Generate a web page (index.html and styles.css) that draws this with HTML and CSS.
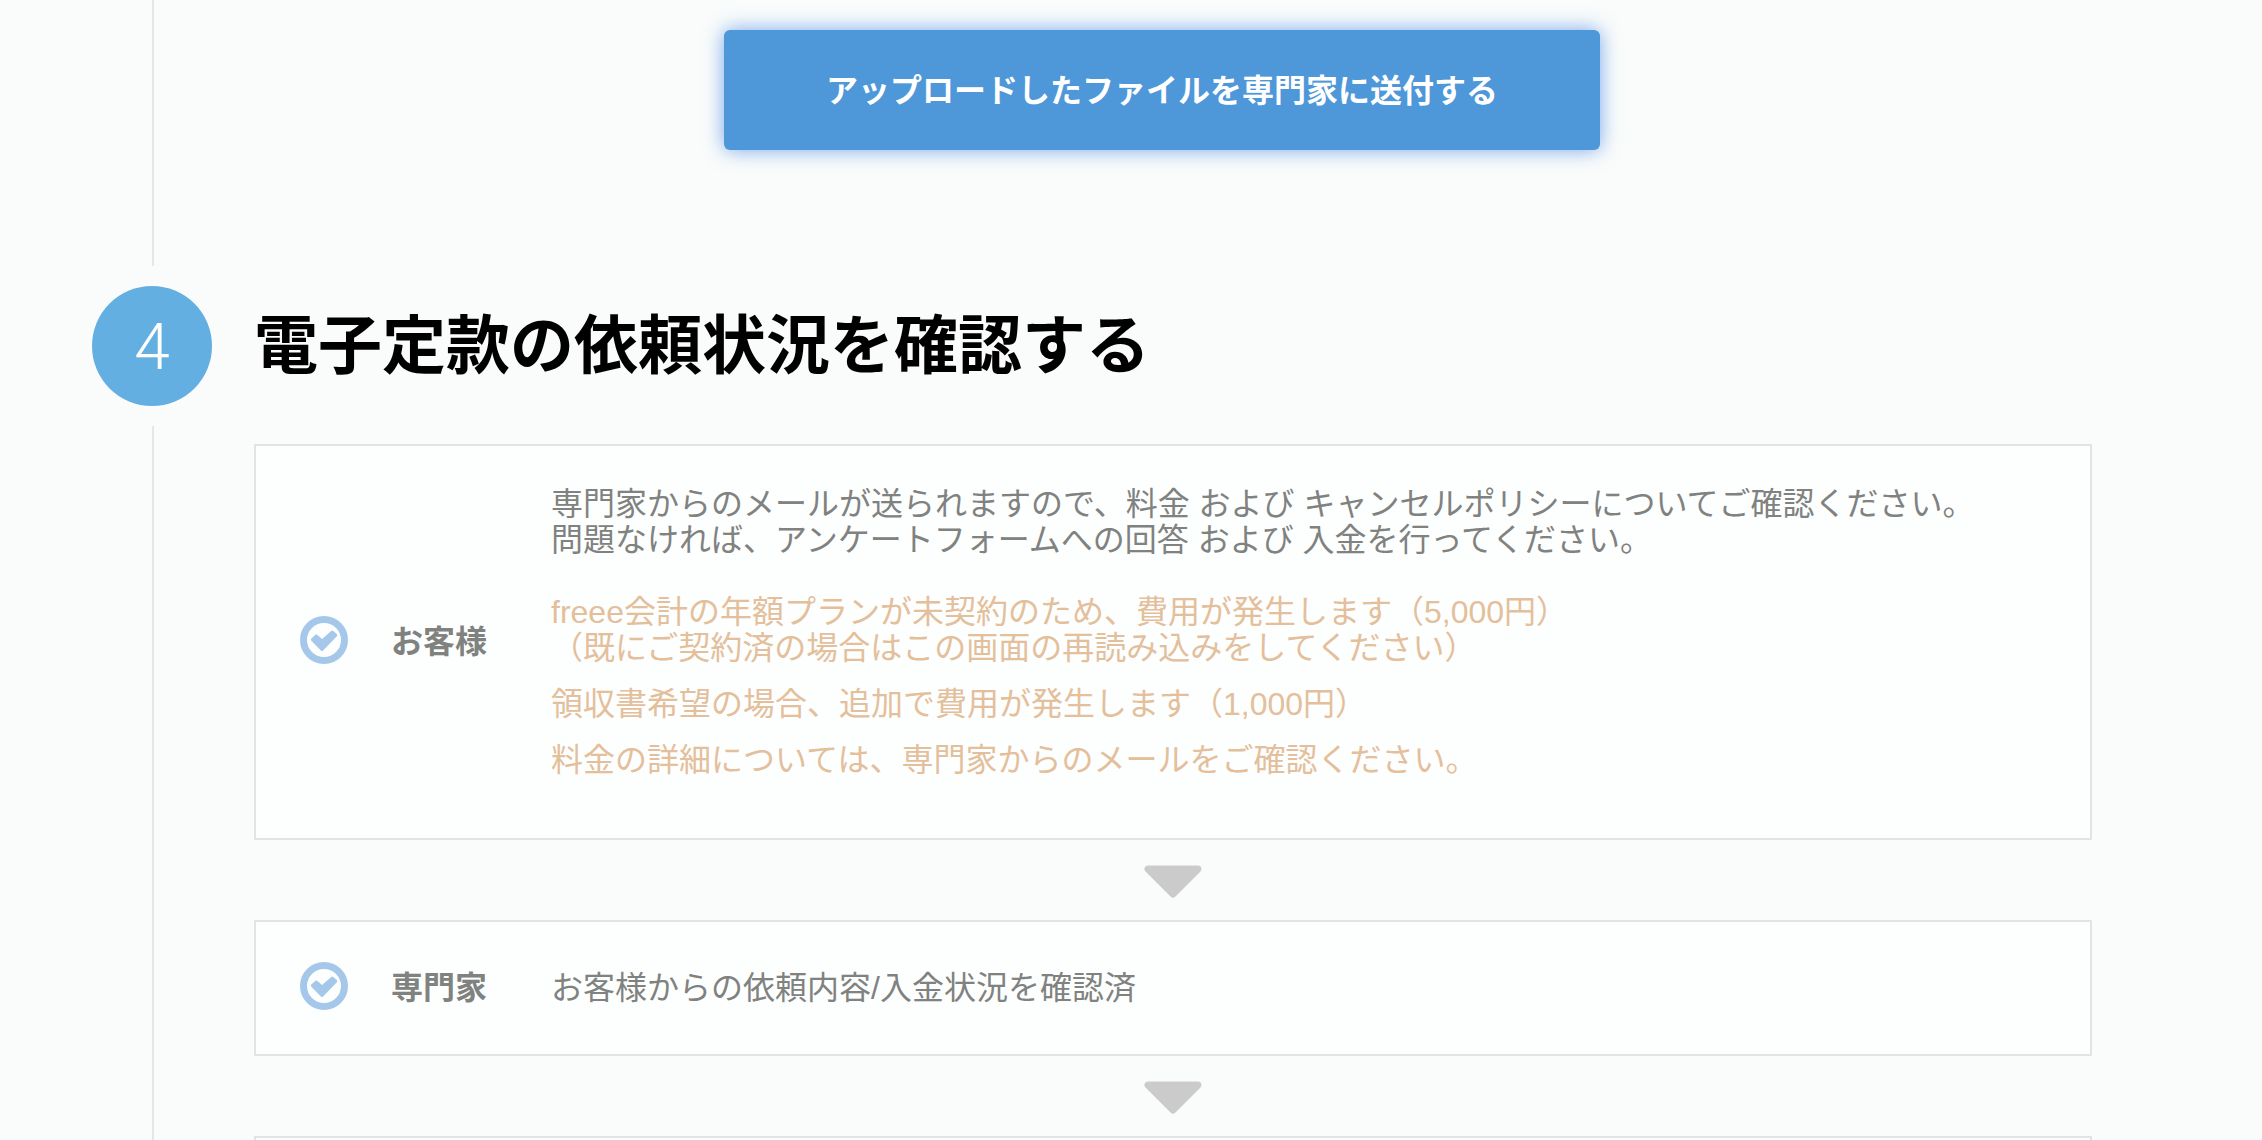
FILE: index.html
```html
<!DOCTYPE html>
<html lang="ja">
<head>
    <meta charset="UTF-8">
    <meta name="viewport" content="width=device-width, initial-scale=1.0">
    <title>電子定款の依頼</title>
    <link rel="stylesheet" href="styles.css">
</head>
<body>
    <svg class="symbols" aria-hidden="true">
        <symbol id="icon-check" viewBox="0 0 48 48">
            <circle cx="24" cy="24" r="20.5" fill="none" stroke="currentColor" stroke-width="7"/>
            <path d="M12.4 23.6 L16.2 20 L22 25 L32.2 16 L35.8 19.2 L22 33.4 Z" fill="currentColor" stroke="currentColor" stroke-width="3" stroke-linejoin="round"/>
        </symbol>
        <symbol id="icon-arrow" viewBox="0 0 58 33">
            <path d="M4 4 H54 L29 29 Z" fill="currentColor" stroke="currentColor" stroke-width="7" stroke-linejoin="round"/>
        </symbol>
    </svg>

    <main class="steps">
        <section class="step">
            <div class="step-marker">
                <span class="step-line"></span>
            </div>
            <div class="step-action">
                <button type="button" class="send-button">アップロードしたファイルを専門家に送付する</button>
            </div>
        </section>

        <section class="step">
            <div class="step-marker">
                <span class="step-number">4</span>
                <span class="step-line"></span>
            </div>
            <div class="step-body">
                <h2 class="step-title">電子定款の依頼状況を確認する</h2>

                <div class="status-card">
                    <svg class="status-icon"><use href="#icon-check"/></svg>
                    <strong class="status-name">お客様</strong>
                    <div class="status-text">
                        <p class="lead">専門家からのメールが送られますので、料金 および キャンセルポリシーについてご確認ください。<br>問題なければ、アンケートフォームへの回答 および 入金を行ってください。</p>
                        <p class="notice">freee会計の年額プランが未契約のため、費用が発生します（5,000円）<br>（既にご契約済の場合はこの画面の再読み込みをしてください）</p>
                        <p class="notice">領収書希望の場合、追加で費用が発生します（1,000円）</p>
                        <p class="notice">料金の詳細については、専門家からのメールをご確認ください。</p>
                    </div>
                </div>

                <svg class="arrow"><use href="#icon-arrow"/></svg>

                <div class="status-card">
                    <svg class="status-icon"><use href="#icon-check"/></svg>
                    <strong class="status-name">専門家</strong>
                    <div class="status-text">お客様からの依頼内容/入金状況を確認済</div>
                </div>

                <svg class="arrow"><use href="#icon-arrow"/></svg>

                <div class="status-card"></div>
            </div>
        </section>
    </main>
</body>
</html>
```

FILE: styles.css
```css
* {
    box-sizing: border-box;
}
body {
    margin: 0;
    background-color: #fafcfb;
    color: #808280;
    font-family: "Liberation Sans", "Noto Sans CJK JP", sans-serif;
    font-size: 32px;
    line-height: 36px;
}
.symbols {
    position: absolute;
    width: 0;
    height: 0;
}
.steps {
    display: flex;
    flex-direction: column;
    gap: 20px;
    height: 100vh;
    padding: 0 170px 0 92px;
    overflow: hidden;
}
.step {
    display: flex;
    flex-shrink: 0;
    gap: 20px;
}

/* 番号と縦線 */
.step-marker {
    display: flex;
    flex-direction: column;
    flex-shrink: 0;
    gap: 20px;
    width: 120px;
}
.step-number {
    height: 120px;
    border-radius: 50%;
    background-color: #63afe1;
    color: white;
    font-family: Roboto, sans-serif;
    font-size: 64px;
    font-weight: 300;
    line-height: 124px;
    text-align: center;
}
.step-line {
    flex: 1;
    width: 2px;
    margin-left: 60px;
    background-color: #e5e6e5;
}

/* 送付ボタン */
.step-action {
    flex: 1;
    padding: 30px 0 116px;
    text-align: center;
}
.send-button {
    display: block;
    height: 120px;
    margin: 0 auto;
    padding: 0 102px 4px;
    border: none;
    border-radius: 6px;
    background-color: #4e97d8;
    box-shadow: 0 0 20px rgba(60, 130, 230, 0.7);
    color: white;
    font-family: inherit;
    font-size: 32px;
    font-weight: bold;
    cursor: pointer;
}

/* 依頼状況 */
.step-body {
    flex: 1;
    padding-left: 22px;
}
.step-title {
    margin: 0 0 38px;
    color: black;
    font-size: 64px;
    line-height: 120px;
}
.status-card {
    display: flex;
    align-items: center;
    min-height: 136px;
    padding: 40px 44px;
    border: 2px solid #e2e3e2;
    background-color: #fdfefe;
}
.status-icon {
    flex-shrink: 0;
    width: 48px;
    height: 52px;
    padding-bottom: 4px;
    color: #a5c8ea;
}
.status-name {
    flex-shrink: 0;
    width: 160px;
    margin-left: 43px;
}
.status-text {
    flex: 1;
}
.status-text p {
    margin: 0 0 20px;
}
.status-text .lead {
    margin-bottom: 36px;
}
.notice {
    color: #e4bf9b;
}
.arrow {
    display: block;
    width: 58px;
    height: 33px;
    margin: 25px auto 22px;
    color: #cbcbcb;
}
```
